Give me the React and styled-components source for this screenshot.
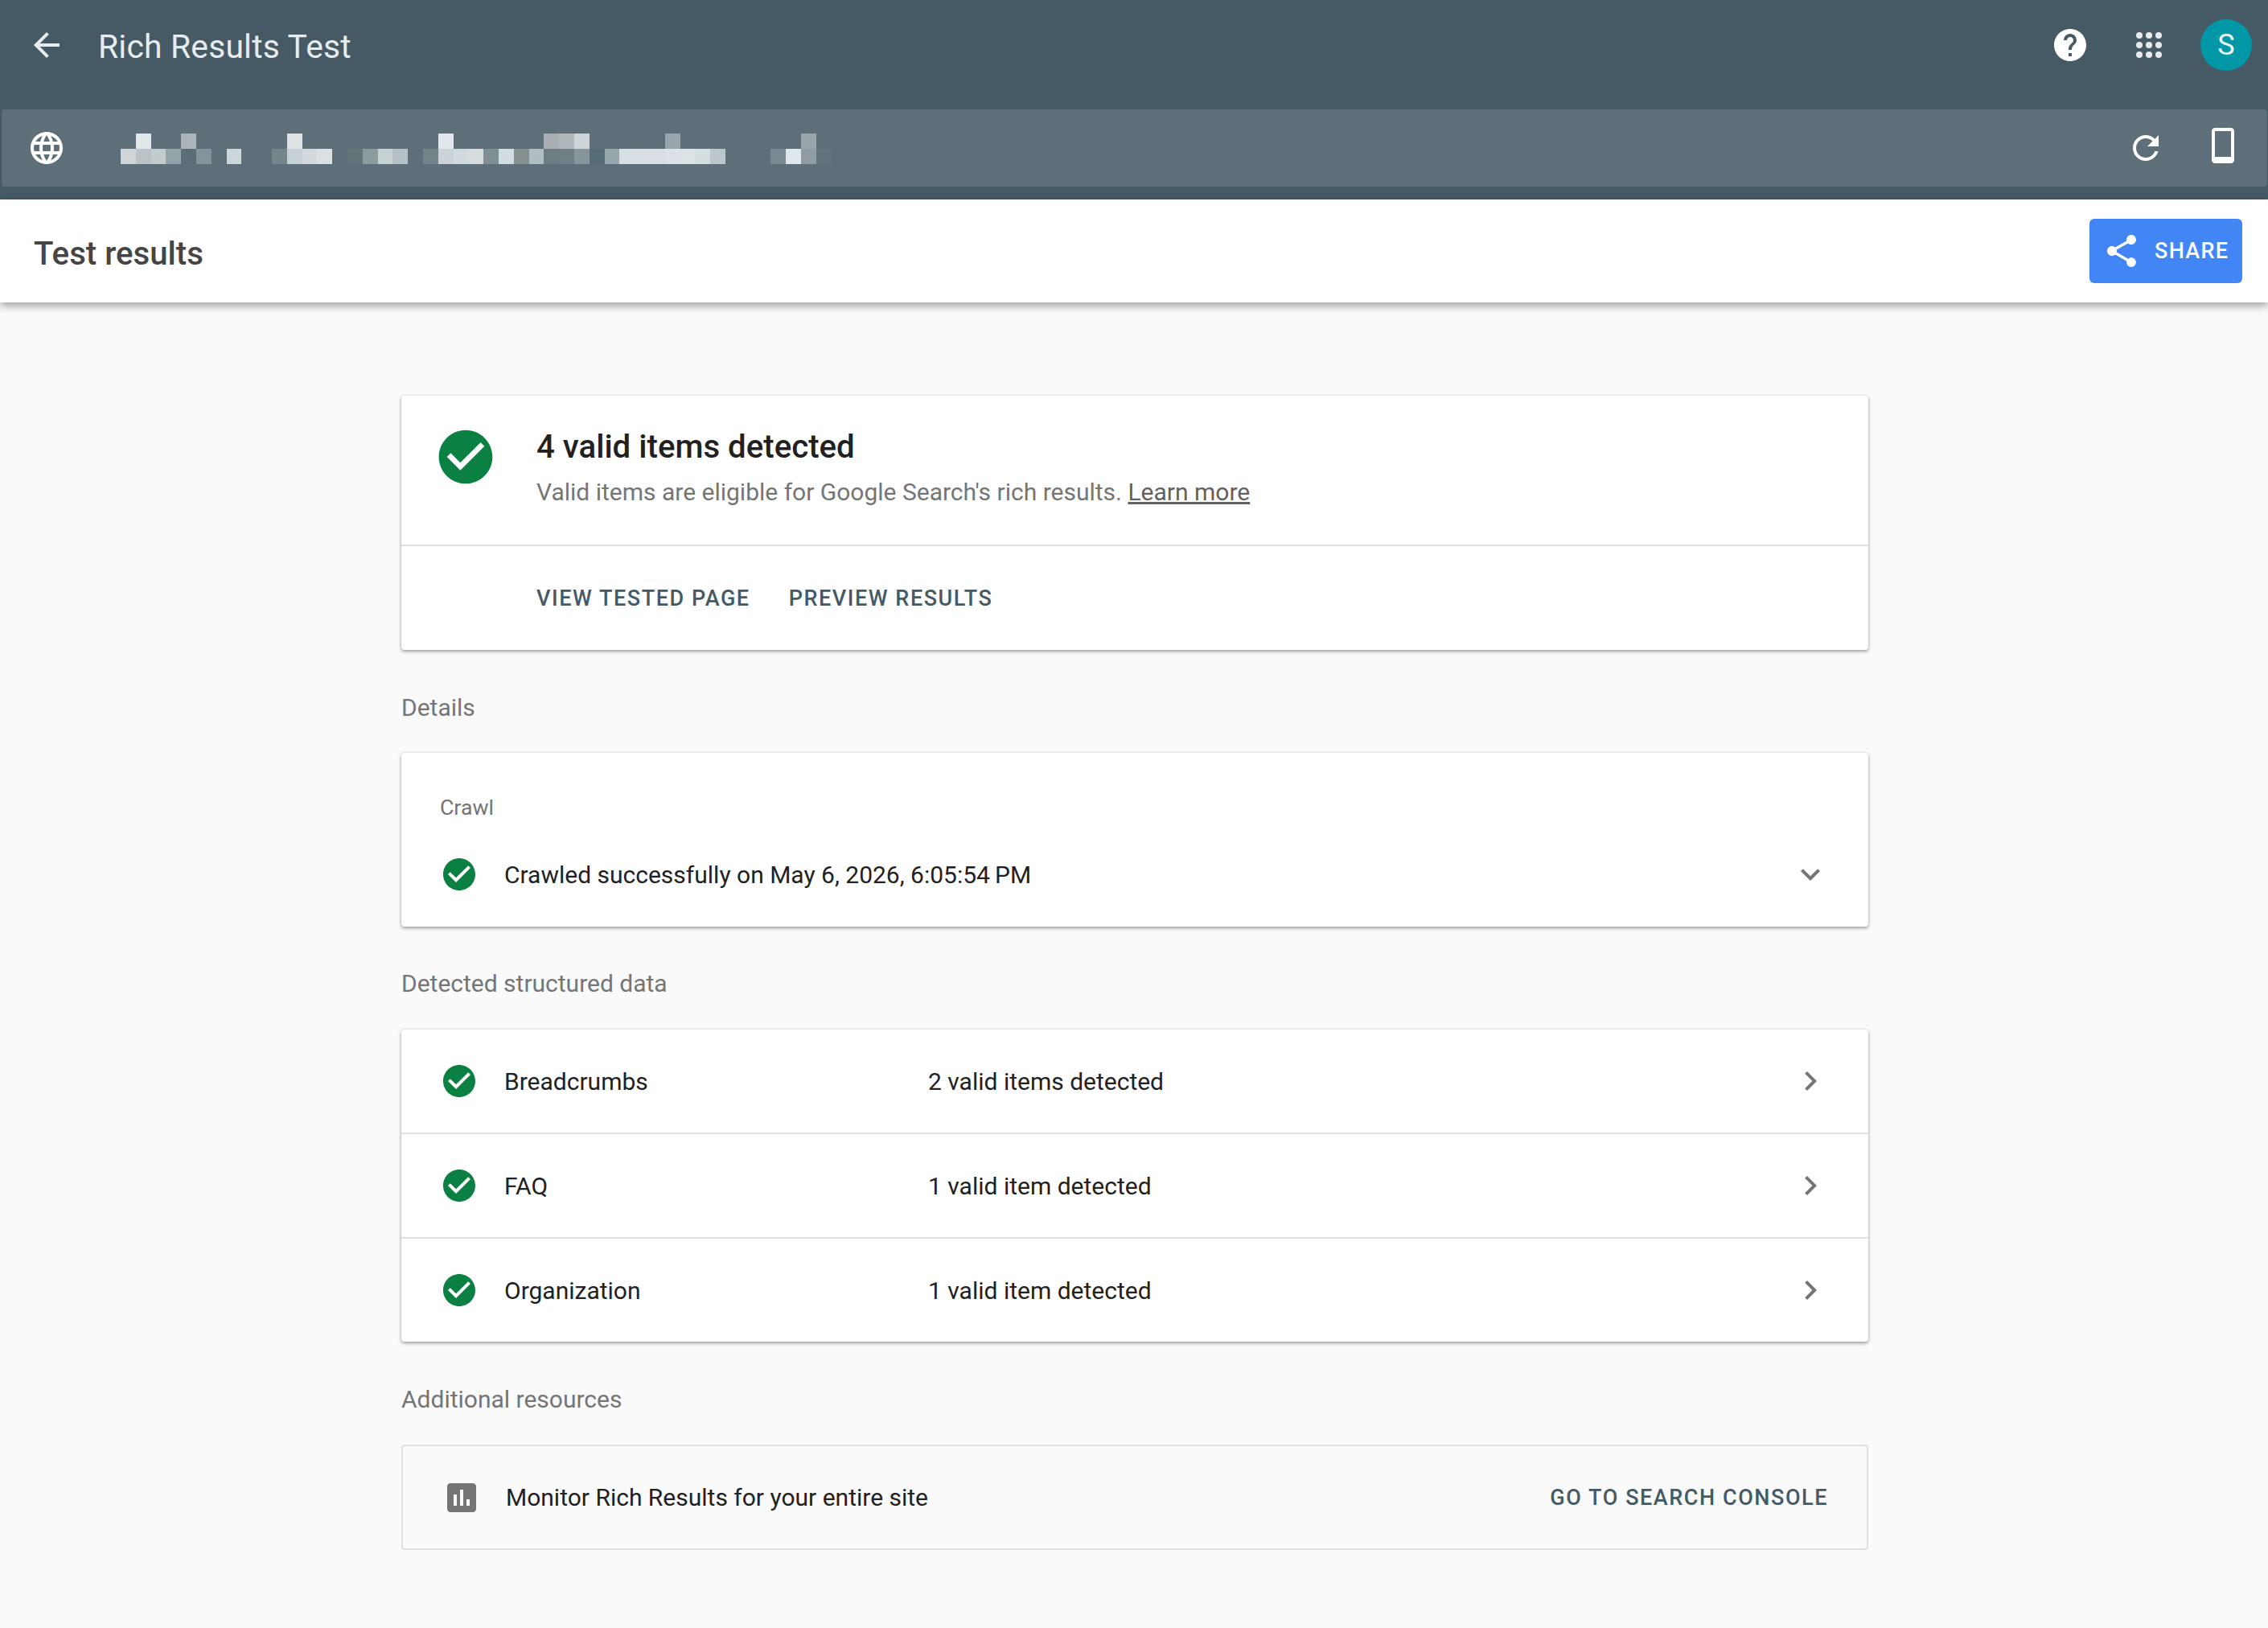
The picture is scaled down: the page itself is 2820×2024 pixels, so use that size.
import React from "react";
import styled, { createGlobalStyle } from "styled-components";

const GlobalStyle = createGlobalStyle`
  html, body {
    margin: 0;
    padding: 0;
    background: #fafafa;
    font-family: Roboto, "Liberation Sans", sans-serif;
  }
`;

const PATHS = {
  back: "M20 11H7.83l5.59-5.59L12 4l-8 8 8 8 1.41-1.41L7.83 13H20v-2z",
  language: "M11.99 2C6.47 2 2 6.48 2 12s4.47 10 9.99 10C17.52 22 22 17.52 22 12S17.52 2 11.99 2zm6.93 6h-2.95c-.32-1.25-.78-2.45-1.38-3.56 1.84.63 3.37 1.91 4.33 3.56zM12 4.04c.83 1.2 1.48 2.53 1.91 3.96h-3.82c.43-1.43 1.08-2.76 1.91-3.96zM4.26 14C4.1 13.36 4 12.69 4 12s.1-1.36.26-2h3.38c-.08.66-.14 1.32-.14 2 0 .68.06 1.34.14 2H4.26zm.82 2h2.95c.32 1.25.78 2.45 1.38 3.56-1.84-.63-3.37-1.9-4.33-3.56zm2.95-8H5.08c.96-1.66 2.49-2.93 4.33-3.56C8.81 5.55 8.35 6.75 8.03 8zM12 19.96c-.83-1.2-1.48-2.53-1.91-3.96h3.82c-.43 1.43-1.08 2.76-1.91 3.96zM14.34 14H9.66c-.09-.66-.16-1.32-.16-2 0-.68.07-1.35.16-2h4.68c.09.65.16 1.32.16 2 0 .68-.07 1.34-.16 2zm.25 5.56c.6-1.11 1.06-2.31 1.38-3.56h2.95c-.96 1.65-2.49 2.93-4.33 3.56zM16.36 14c.08-.66.14-1.32.14-2 0-.68-.06-1.34-.14-2h3.38c.16.64.26 1.31.26 2s-.1 1.36-.26 2h-3.38z",
  help: "M12 2C6.48 2 2 6.48 2 12s4.48 10 10 10 10-4.48 10-10S17.52 2 12 2zm1 17h-2v-2h2v2zm2.07-7.75l-.9.92C13.45 12.9 13 13.5 13 15h-2v-.5c0-1.1.45-2.1 1.17-2.83l1.24-1.26c.37-.36.59-.86.59-1.41 0-1.1-.9-2-2-2s-2 .9-2 2H8c0-2.21 1.79-4 4-4s4 1.79 4 4c0 .88-.36 1.68-.93 2.25z",
  refresh: "M17.65 6.35C16.2 4.9 14.21 4 12 4c-4.42 0-7.99 3.58-7.99 8s3.57 8 7.99 8c3.73 0 6.84-2.55 7.73-6h-2.08c-.82 2.33-3.04 4-5.65 4-3.31 0-6-2.69-6-6s2.69-6 6-6c1.66 0 3.14.69 4.22 1.78L13 11h7V4l-2.35 2.35z",
  phone: "M17 1.01L7 1c-1.1 0-2 .9-2 2v18c0 1.1.9 2 2 2h10c1.1 0 2-.9 2-2V3c0-1.1-.9-1.99-2-1.99zM17 19H7V3h10v16z",
  share: "M18 16.08c-.76 0-1.44.3-1.96.77L8.91 12.7c.05-.23.09-.46.09-.7s-.04-.47-.09-.7l7.05-4.11c.54.5 1.25.81 2.04.81 1.66 0 3-1.34 3-3s-1.34-3-3-3-3 1.34-3 3c0 .24.04.47.09.7L8.04 9.81C7.5 9.31 6.79 9 6 9c-1.66 0-3 1.34-3 3s1.34 3 3 3c.79 0 1.5-.31 2.04-.81l7.12 4.16c-.05.21-.08.43-.08.65 0 1.61 1.31 2.92 2.92 2.92 1.61 0 2.92-1.31 2.92-2.92s-1.31-2.92-2.92-2.92z",
  check: "M12 2C6.48 2 2 6.48 2 12s4.48 10 10 10 10-4.48 10-10S17.52 2 12 2zm-2 15l-5-5 1.41-1.41L10 14.17l7.59-7.59L19 8l-9 9z",
  right: "M10 6L8.59 7.41 13.17 12l-4.58 4.59L10 18l6-6z",
  down: "M16.59 8.59L12 13.17 7.41 8.59 6 10l6 6 6-6z",
  assessment: "M19 3H5c-1.1 0-2 .9-2 2v14c0 1.1.9 2 2 2h14c1.1 0 2-.9 2-2V5c0-1.1-.9-2-2-2zM9 17H7v-7h2v7zm4 0h-2V7h2v10zm4 0h-2v-4h2v4z",
};

const Svg = styled.svg`
  display: block;
  flex: none;
  fill: ${(p) => p.$color || "#fff"};
`;

const Icon = ({ name, size = 48, color }) => (
  <Svg $color={color} width={size} height={size} viewBox="0 0 24 24">
    <path d={PATHS[name]} />
  </Svg>
);

const AppsIcon = () => (
  <Svg $color="#e8eaed" width="48" height="48" viewBox="0 0 48 48">
    {[12, 24, 36].map((cy) =>
      [12, 24, 36].map((cx) => <circle key={cx + "-" + cy} cx={cx} cy={cy} r="4" />)
    )}
  </Svg>
);

// the blurred address: [column, top row colour, bottom row colour]
const MOSAIC = [
  [0, null, "#d0d5d7"], [1, "#e0e7e9", "#bcc3c7"], [2, null, "#c3cccd"], [3, null, "#94a3a9"],
  [4, "#adb4b8", "#5a6e78"], [5, null, "#85939a"], [7, null, "#cdd7da"], [10, null, "#74858c"],
  [11, "#dde2e5", "#c5d1d4"], [12, null, "#d2d8dc"], [13, null, "#dbe0e2"], [15, null, "#64747b"],
  [16, null, "#8e9b9e"], [17, null, "#c5d2d2"], [18, null, "#b5c1c7"], [20, null, "#73838a"],
  [21, "#e1e7ea", "#cbd2d8"], [22, null, "#d0dadf"], [23, null, "#d7dcdf"], [24, null, "#7f8d94"],
  [25, null, "#d2dde1"], [26, null, "#84918f"], [27, null, "#b0bdc1"], [28, "#a8aeb1", "#6d7d84"],
  [29, "#b0b8bb", "#6f7f85"], [30, "#cdd5d8", "#87969a"], [31, null, "#566c78"], [32, null, "#98a6ad"],
  [33, null, "#d8dfe2"], [34, null, "#d8dfe2"], [35, null, "#d8dee1"], [36, "#98a5ac", "#dde1e5"],
  [37, null, "#dce3e5"], [38, null, "#d4dfe0"], [39, null, "#bcc7cb"], [43, null, "#7b8a92"],
  [44, null, "#dee8ea"], [45, "#98a5aa", "#8f9ca4"], [46, null, "#62747b"],
];

const CELL = 18.8;

const Mosaic = () => (
  <svg width="886" height="38" viewBox="0 0 886 38" shapeRendering="crispEdges" style={{ display: "block" }}>
    {MOSAIC.map(([col, top, bottom]) => (
      <g key={col}>
        {top && <rect x={col * CELL} y="0" width={CELL} height="19" fill={top} />}
        <rect x={col * CELL} y="19" width={CELL} height="19" fill={bottom} />
      </g>
    ))}
  </svg>
);

const Header = styled.header`
  background: #465a65;
  height: 248px;
`;

const TopRow = styled.div`
  height: 112px;
  padding-bottom: 24px;
  display: flex;
  align-items: center;
  padding-left: 34px;
  padding-right: 20px;
`;

const AppTitle = styled.div`
  margin: 3px 0 0 40px;
  font-size: 40.8px;
  line-height: 48px;
  color: #e8ecee;
  letter-spacing: 0.2px;
  flex: 1;
`;

const TopIcons = styled.div`
  display: flex;
  align-items: center;
`;

const AppsSlot = styled.div`
  margin: 0 40px 0 50px;
`;

const Avatar = styled.div`
  width: 64px;
  height: 64px;
  border-radius: 50%;
  background: #0097a7;
  color: #e6f7f8;
  font-size: 36px;
  display: flex;
  align-items: center;
  justify-content: center;
`;

const UrlBar = styled.div`
  height: 96px;
  margin: 0 1px 0 2px;
  background: #5e6f79;
  border-radius: 4px;
  display: flex;
  align-items: center;
  padding: 0 31px 0 32px;
`;

const UrlMosaic = styled.div`
  margin-left: 68px;
  margin-top: 2px;
  flex: 1;
`;

const UrlAction = styled.div`
  margin-left: 48px;
  margin-top: ${(p) => p.$lift || 0}px;
`;

const TitleBar = styled.div`
  height: 128px;
  background: #fff;
  box-shadow: 0 4px 10px rgba(0, 0, 0, 0.38);
  position: relative;
  display: flex;
  align-items: center;
  justify-content: space-between;
  padding: 0 32px 0 42px;
`;

const PageTitle = styled.h1`
  margin: 6px 0 0;
  font-size: 40.2px;
  font-weight: 500;
  color: #454545;
`;

const ShareButton = styled.div`
  width: 190px;
  height: 80px;
  box-sizing: border-box;
  padding-left: 16px;
  background: #4285f4;
  border-radius: 6px;
  display: flex;
  align-items: center;
  color: #fff;
  font-size: 27px;
  font-weight: 500;
  letter-spacing: 1.3px;
  gap: 17px;
`;

const Main = styled.main`
  width: 1824px;
  margin-left: 499px;
  padding-top: 116px;
  padding-bottom: 97px;
`;

const Card = styled.section`
  background: #fff;
  border-radius: 4px;
  box-shadow: 0 2px 4px rgba(0, 0, 0, 0.36), 0 0 3px rgba(0, 0, 0, 0.1);
`;

const SummaryTop = styled.div`
  height: 187px;
  box-sizing: border-box;
  display: flex;
  padding: 36px 0 0 40px;
  border-bottom: 2px solid #e0e0e0;
`;

const SummaryText = styled.div`
  margin-left: 48px;
`;

const SummaryTitle = styled.div`
  font-size: 40.2px;
  line-height: 50px;
  font-weight: 500;
  color: #212121;
  margin-top: 3px;
`;

const SummarySub = styled.div`
  font-size: 30px;
  line-height: 40px;
  margin-top: 11px;
  color: #757575;
`;

const LearnMore = styled.a`
  color: #616161;
  text-decoration: underline;
`;

const SummaryActions = styled.div`
  height: 129px;
  display: flex;
  align-items: center;
  gap: 48px;
  padding-left: 168px;
`;

const ActionLink = styled.div`
  font-size: 27px;
  font-weight: 500;
  letter-spacing: 1.55px;
  color: #455a64;
  white-space: nowrap;
`;

const SectionLabel = styled.div`
  font-size: 30px;
  line-height: 40px;
  color: #757575;
  margin: ${(p) => p.$top}px 0 ${(p) => p.$bottom}px;
`;

const CrawlCard = styled(Card)`
  height: 216px;
  box-sizing: border-box;
  padding: 51px 48px 0 48px;
`;

const CrawlLabel = styled.div`
  font-size: 26.7px;
  line-height: 34px;
  color: #757575;
`;

const CrawlRow = styled.div`
  display: flex;
  align-items: center;
  margin-top: 42px;
`;

const RowText = styled.div`
  font-size: 30px;
  color: #212121;
  margin-left: 32px;
  flex: ${(p) => (p.$grow ? 1 : "none")};
  width: ${(p) => (p.$wide ? "527px" : "auto")};
`;

const DataRow = styled.div`
  height: ${(p) => (p.$last ? 128 : 130)}px;
  box-sizing: border-box;
  display: flex;
  align-items: center;
  padding: 0 48px;
  border-bottom: ${(p) => (p.$last ? "none" : "2px solid #e0e0e0")};
`;

const RowValue = styled.div`
  font-size: 30px;
  color: #212121;
  flex: 1;
`;

const ResourceCard = styled.section`
  height: 131px;
  box-sizing: border-box;
  border: 2px solid #e0e0e0;
  border-radius: 4px;
  display: flex;
  align-items: center;
  padding: 0 48px 0 49px;
`;

const ResourceText = styled.div`
  font-size: 30px;
  color: #212121;
  margin-left: 31px;
  flex: 1;
`;

const rows = [
  ["Breadcrumbs", "2 valid items detected"],
  ["FAQ", "1 valid item detected"],
  ["Organization", "1 valid item detected"],
];

export default function App() {
  return (
    <>
      <GlobalStyle />
      <Header>
        <TopRow>
          <Icon name="back" color="#e8ecee" />
          <AppTitle>Rich Results Test</AppTitle>
          <TopIcons>
            <Icon name="help" />
            <AppsSlot>
              <AppsIcon />
            </AppsSlot>
            <Avatar>S</Avatar>
          </TopIcons>
        </TopRow>
        <UrlBar>
          <Icon name="language" />
          <UrlMosaic>
            <Mosaic />
          </UrlMosaic>
          <Icon name="refresh" />
          <UrlAction $lift={-6}>
            <Icon name="phone" />
          </UrlAction>
        </UrlBar>
      </Header>
      <TitleBar>
        <PageTitle>Test results</PageTitle>
        <ShareButton>
          <Icon name="share" />
          SHARE
        </ShareButton>
      </TitleBar>
      <Main>
        <Card>
          <SummaryTop>
            <Icon name="check" size={80} color="#0b8043" />
            <SummaryText>
              <SummaryTitle>4 valid items detected</SummaryTitle>
              <SummarySub>
                Valid items are eligible for Google Search's rich results. <LearnMore>Learn more</LearnMore>
              </SummarySub>
            </SummaryText>
          </SummaryTop>
          <SummaryActions>
            <ActionLink>VIEW TESTED PAGE</ActionLink>
            <ActionLink>PREVIEW RESULTS</ActionLink>
          </SummaryActions>
        </Card>
        <SectionLabel $top={52} $bottom={36}>Details</SectionLabel>
        <CrawlCard>
          <CrawlLabel>Crawl</CrawlLabel>
          <CrawlRow>
            <Icon name="check" color="#0b8043" />
            <RowText $grow>Crawled successfully on May 6, 2026, 6:05:54{"\u2009"}PM</RowText>
            <Icon name="down" color="#757575" />
          </CrawlRow>
        </CrawlCard>
        <SectionLabel $top={51} $bottom={37}>Detected structured data</SectionLabel>
        <Card>
          {rows.map(([name, value], i) => (
            <DataRow key={name} $last={i === rows.length - 1}>
              <Icon name="check" color="#0b8043" />
              <RowText $wide>{name}</RowText>
              <RowValue>{value}</RowValue>
              <Icon name="right" color="#757575" />
            </DataRow>
          ))}
        </Card>
        <SectionLabel $top={52} $bottom={36}>Additional resources</SectionLabel>
        <ResourceCard>
          <Icon name="assessment" color="#757575" />
          <ResourceText>Monitor Rich Results for your entire site</ResourceText>
          <ActionLink>GO TO SEARCH CONSOLE</ActionLink>
        </ResourceCard>
      </Main>
    </>
  );
}
